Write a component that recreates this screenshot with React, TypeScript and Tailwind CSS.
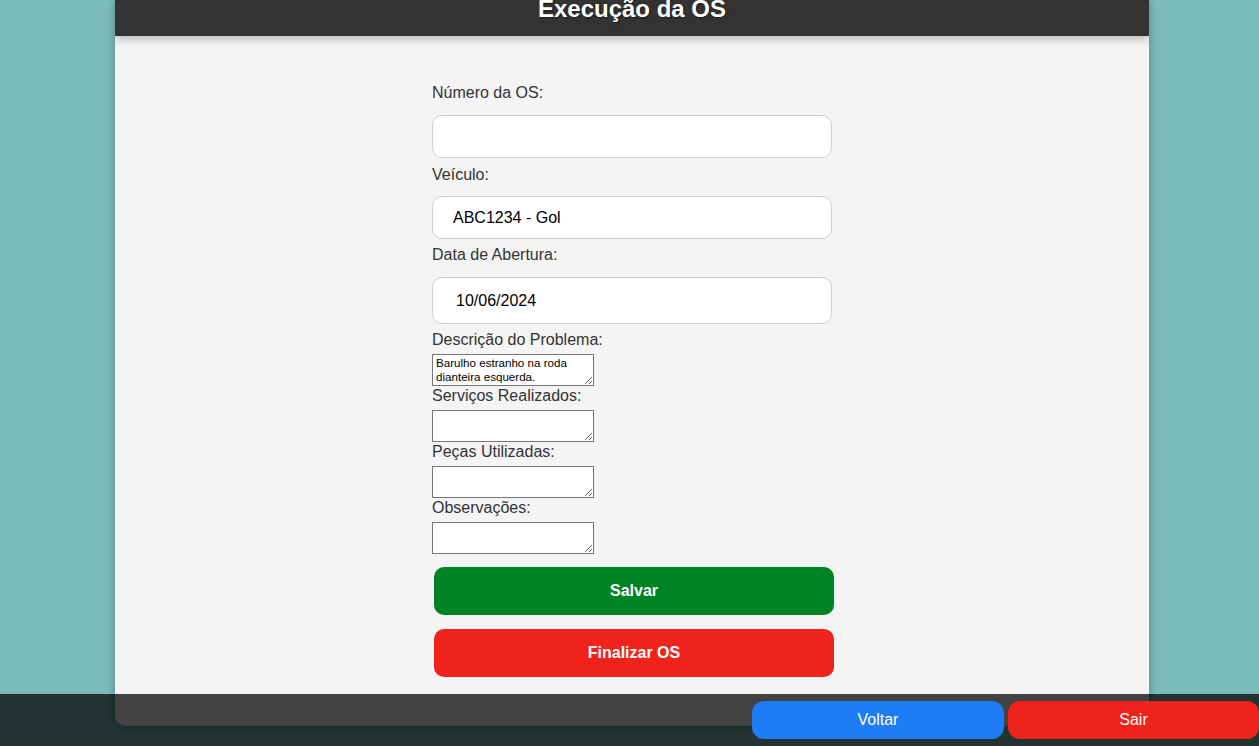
import React from "react";

const label = "mb-[5px] block text-base leading-[18px] text-[#333]";
const field =
  "block w-[400px] rounded-[10px] border border-[#cfcfcf] bg-white pl-[20px] text-base text-black outline-none";
const area =
  "block h-[32px] w-[162px] border border-[#767676] bg-white px-[3px] py-[1px] text-[11.6px] leading-[14px] text-black font-['Liberation_Sans',Arial,sans-serif]";

export default function App() {
  return (
    <div className="relative h-[746px] overflow-hidden bg-[#7abcbc] font-['Liberation_Sans',Arial,sans-serif]">
      <div className="ml-[115px] h-[726px] w-[1034px] overflow-hidden rounded-b-[10px] bg-[#f4f4f4] shadow-[0_0_10px_rgba(0,0,0,0.3)]">
        <header className="relative z-10 h-[36px] bg-[#333] text-center shadow-[0_3px_8px_rgba(0,0,0,0.25)]">
          <h1 className="relative top-[-3px] text-[24px] font-bold leading-[24px] text-white [text-shadow:1px_1px_2px_rgba(0,0,0,0.5)]">
            Execução da OS
          </h1>
        </header>

        <form className="mx-auto flex w-[400px] flex-col pt-[48px]">
          <label className={label}>Número da OS:</label>
          <input className={`${field} my-2 h-[43px]`} defaultValue="" />

          <label className={label}>Veículo:</label>
          <input className={`${field} mb-[7px] mt-[7px] h-[43px]`} defaultValue="ABC1234 - Gol" />

          <label className={label}>Data de Abertura:</label>
          <input className={`${field} mb-[7px] mt-2 h-[47px] pl-[23px]`} defaultValue="10/06/2024" />

          <label className={label}>Descrição do Problema:</label>
          <textarea
            className={area}
            defaultValue="Barulho estranho na roda dianteira esquerda."
          />

          <label className={`${label} mt-[1px]`}>Serviços Realizados:</label>
          <textarea className={area} />

          <label className={`${label} mt-[1px]`}>Peças Utilizadas:</label>
          <textarea className={area} />

          <label className={`${label} mt-[1px]`}>Observações:</label>
          <textarea className={area} />

          <button
            type="button"
            className="ml-[2px] mt-[13px] h-[48px] w-[400px] rounded-[10px] bg-[#008225] text-base font-bold text-white"
          >
            Salvar
          </button>
          <button
            type="button"
            className="ml-[2px] mt-[14px] h-[48px] w-[400px] rounded-[10px] bg-[#f0221c] text-base font-bold text-white"
          >
            Finalizar OS
          </button>
        </form>
      </div>

      <div className="absolute bottom-0 left-0 right-0 flex h-[52px] items-center justify-end gap-[4px] bg-black/[0.73]">
        <button
          type="button"
          className="h-[38px] w-[252px] rounded-[12px] bg-[#1e7cf4] text-base text-white"
        >
          Voltar
        </button>
        <button
          type="button"
          className="h-[38px] w-[251px] rounded-[12px] bg-[#f0221c] text-base text-white"
        >
          Sair
        </button>
      </div>
    </div>
  );
}
